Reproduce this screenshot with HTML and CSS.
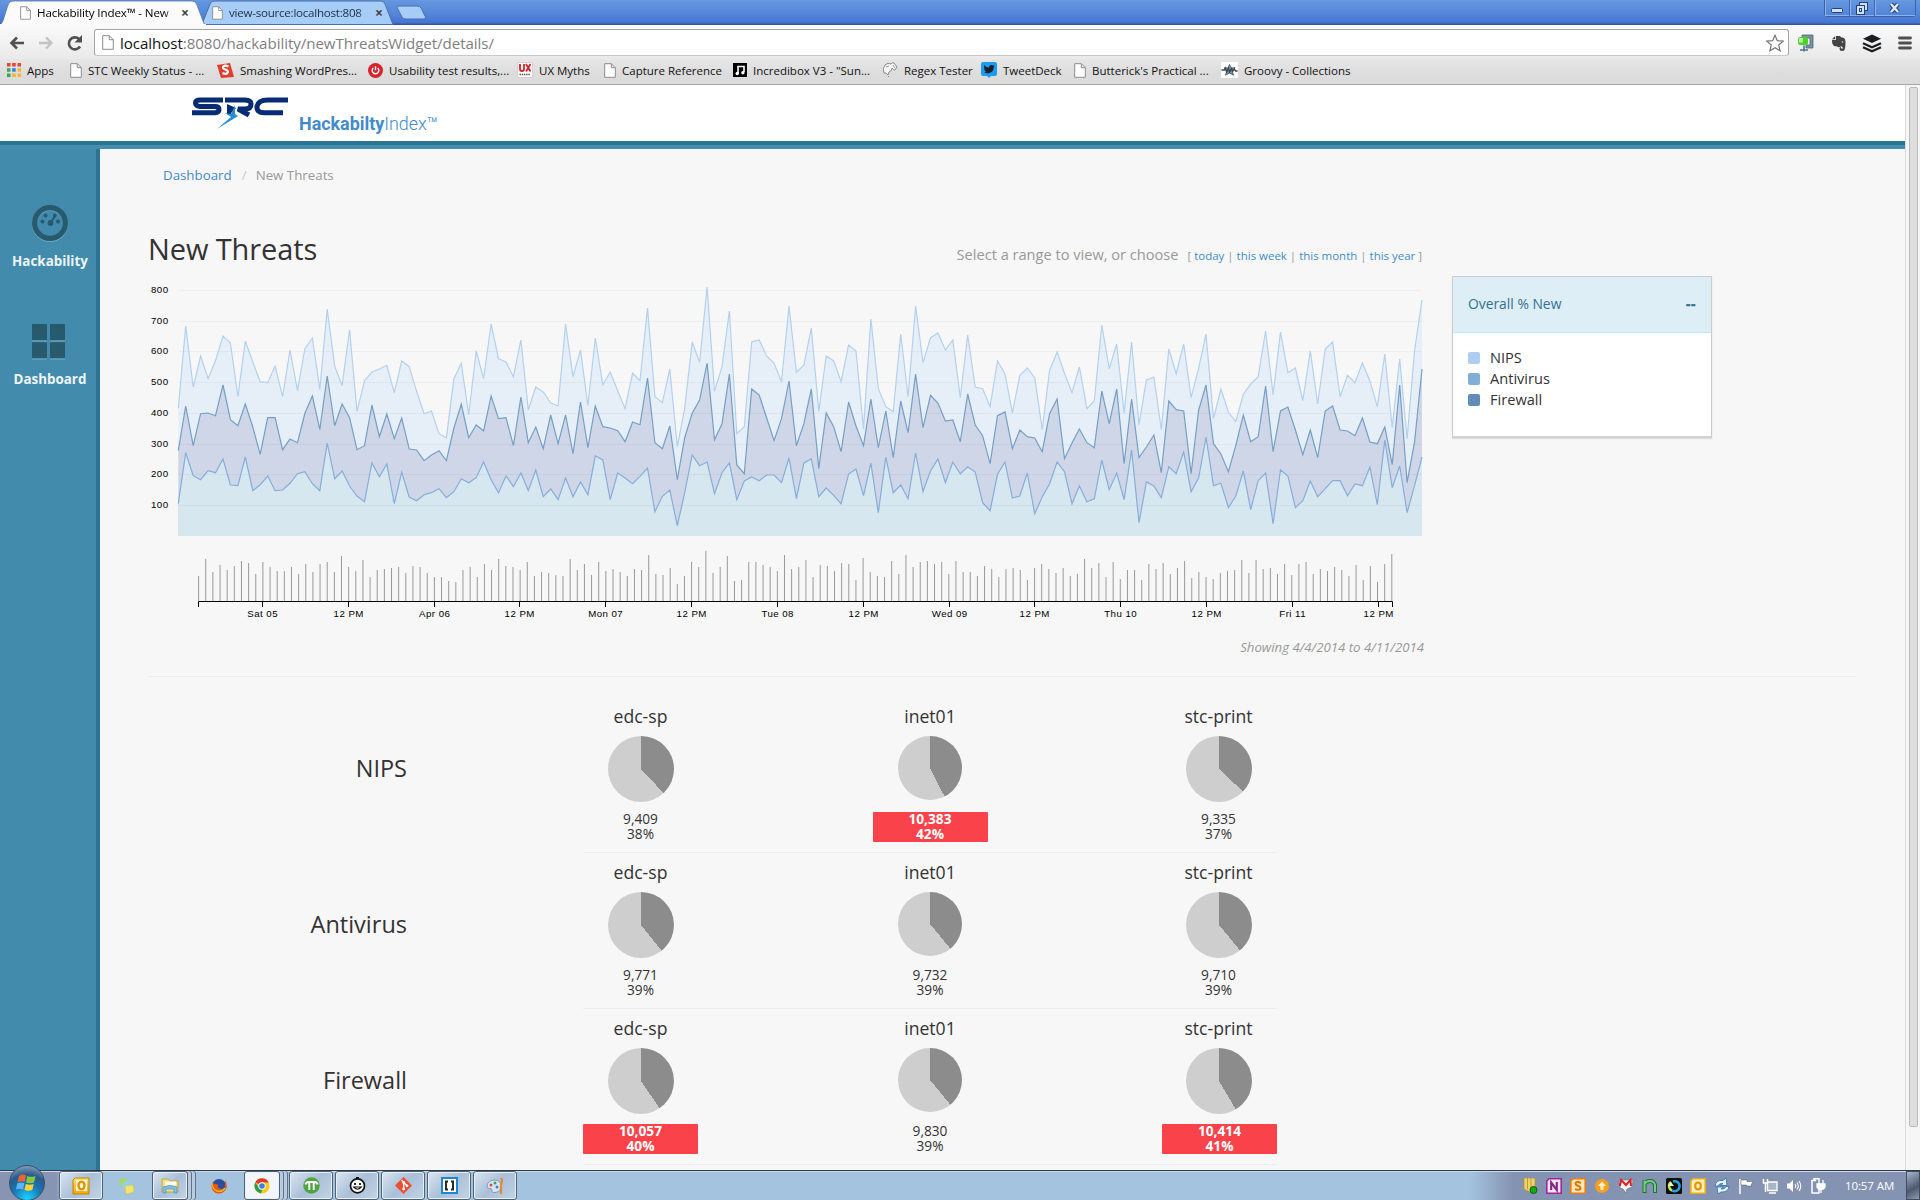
FILE: index.html
```html
<!DOCTYPE html>
<html lang="en">
<head>
<meta charset="utf-8">
<title>Hackability Index™ - New Threats</title>
<link rel="stylesheet" href="styles.css">
</head>
<body>
<svg width="0" height="0" class="defs">
  <defs>
    <symbol id="page" viewBox="0 0 12 15"><path d="M.7.7h6.6l4 4v9.6H.7z" fill="#fff" stroke="#8c8c8c"/><path d="M7.3.7v4h4" fill="none" stroke="#8c8c8c"/></symbol>
    <linearGradient id="gold" x1="0" y1="0" x2="0" y2="1"><stop offset="0" stop-color="#ffdf6b"/><stop offset="1" stop-color="#f0a800"/></linearGradient>
  </defs>
</svg>

<div class="titlebar">
  <svg class="tabs" width="440" height="25" viewBox="0 0 440 25">
    <path d="M202 24.5L210 4q1-3 4-3h167q3 0 4 3l8 20.500z" fill="#a6cdf8" stroke="#4a6fae"/>
    <path d="M397 7.500q0-1.500 2-1.500h18q3 0 4 2l4.500 9q.5 2-1.500 2h-18q-3 0-4-2z" fill="#a6cdf8" stroke="#4a6fae"/>
    <path d="M-1 25C3 24 3 20 8 5q1-4 5-4h179q4 0 5 4l6 16q1 4 3 4z" fill="#fbfbfb" stroke="#5573a8" stroke-width=".8"/>
    <path d="M0 25h206" stroke="#fbfbfb" stroke-width="2"/>
  </svg>
  <div class="tab tab-active"><svg class="i-page" width="11" height="14"><use href="#page"/></svg><span class="tab-title t1">Hackability Index™ - New</span><span class="tab-x">×</span></div>
  <div class="tab tab-back"><svg class="i-page" width="11" height="14"><use href="#page"/></svg><span class="tab-title t2">view-source:localhost:808</span><span class="tab-x">×</span></div>
  <div class="winbtns">
    <span><svg width="14" height="16" viewBox="0 0 14 16"><rect x="1.500" y="8.500" width="11" height="4" rx="1" fill="#cfe1fb" stroke="#25407a"/></svg></span>
    <span><svg width="14" height="16" viewBox="0 0 14 16"><rect x="4.500" y="2.500" width="8" height="8" fill="#cfe1fb" stroke="#25407a"/><rect x="1.500" y="5.500" width="8" height="9" fill="#cfe1fb" stroke="#25407a"/><rect x="4.500" y="8.500" width="2" height="3" fill="none" stroke="#25407a"/></svg></span>
    <span><svg width="14" height="16" viewBox="0 0 14 16"><path d="M3 4l7 8M10 4l-7 8" stroke="#25407a" stroke-width="4.500"/><path d="M3 4l7 8M10 4l-7 8" stroke="#dbe8fc" stroke-width="2.500"/></svg></span>
  </div>
</div>

<div class="toolbar">
  <div class="nav">
    <svg width="18" height="18" viewBox="0 0 18 18"><path d="M16 9H4M9 3.500L3.500 9 9 14.500" fill="none" stroke="#505050" stroke-width="2.600"/></svg>
    <svg width="18" height="18" viewBox="0 0 18 18"><path d="M2 9h12M9 3.500L14.500 9 9 14.500" fill="none" stroke="#c4c4c4" stroke-width="2.400"/></svg>
    <svg width="18" height="18" viewBox="0 0 18 18"><path d="M14 12.500A6 6 0 1 1 13 5" fill="none" stroke="#505050" stroke-width="2.600"/><path d="M16 1v7.500H8.500z" fill="#505050"/></svg>
  </div>
  <div class="omnibox">
    <svg width="12" height="15"><use href="#page"/></svg>
    <span class="url"><b>localhost</b>:8080/hackability/newThreatsWidget/details/</span>
    <svg class="star" width="18" height="18" viewBox="0 0 18 18"><path d="M9 1.200l2.300 5.500 5.900.4-4.500 3.900 1.400 5.800L9 13.700l-5.100 3.100 1.400-5.800L.8 7.100l5.900-.4z" fill="#fff" stroke="#777" stroke-width="1.200"/></svg>
  </div>
  <div class="exts">
    <svg width="18" height="20" viewBox="0 0 18 20"><path d="M5 2h11v13H9v-3h4V5H5z" fill="#7b93a1" stroke="#4e6472" stroke-width=".8"/><rect x="1" y="4" width="10" height="8" rx="2" fill="#4ed22a"/><rect x="2" y="5" width="4" height="4.500" fill="#b9f59e"/><path d="M7 12.500v6M3 17h8" stroke="#4d7394" stroke-width="1.600"/></svg>
    <svg width="16" height="18" viewBox="0 0 16 18"><path d="M5 2h4l1 1.300 3 .7q1.500 1 1.500 5t-1 7q-.5 1-2.500 1-2.500 0-2.500-2.300 0-1.700 1.500-1.700v1.500h2q0-2-2-2.200Q8 14 6 12.500 2.500 12.500 1.500 10 1 8 1 6h4z" fill="#434343"/><path d="M4.200 2v3.200H1z" fill="#434343"/><circle cx="11.500" cy="8" r=".8" fill="#ddd"/></svg>
    <svg width="20" height="20" viewBox="0 0 20 20"><path d="M10 1.500l9 4.200-9 4.200-9-4.200z" fill="#1b1f22"/><path d="M1 10.200l9 4 9-4M1 14.300l9 4 9-4" fill="none" stroke="#1b1f22" stroke-width="2.300"/></svg>
    <svg width="14" height="14" viewBox="0 0 14 14"><path d="M1.500 2h11M1.500 7h11M1.500 12h11" stroke="#4f4f4f" stroke-width="2.800" stroke-linecap="round"/></svg>
  </div>
</div>

<div class="bookmarks">
  <div class="bm"><svg width="14" height="14" viewBox="0 0 14 14"><path d="M0 0h3.500v3.500H0zM5.200 0h3.500v3.500H5.200zM10.500 0H14v3.500h-3.500z" fill="#ea4335"/><path d="M0 5.200h3.500v3.500H0zM0 10.500h3.500V14H0z" fill="#34a853"/><path d="M5.200 5.200h3.500v3.500H5.200z" fill="#2f80ed"/><path d="M10.500 5.200H14v3.500h-3.500zM5.200 10.500h3.500V14H5.200zM10.500 10.500H14V14h-3.500z" fill="#f7b529"/></svg><span>Apps</span></div>
  <div class="bm"><svg width="12" height="15"><use href="#page"/></svg><span>STC Weekly Status - ...</span></div>
  <div class="bm"><svg width="17" height="16" viewBox="0 0 17 16"><path d="M0 3l13-2 4 14-13 1z" fill="#e53b2c"/><path d="M11.500 4.500Q7 2.500 6 5.200c-.5 2.500 5.500 2.200 5 5Q10 13 5.500 11" fill="none" stroke="#fff" stroke-width="2.200"/></svg><span>Smashing WordPres...</span></div>
  <div class="bm"><svg width="15" height="15" viewBox="0 0 15 15"><circle cx="7.500" cy="7.500" r="7.500" fill="#d8232e"/><path d="M5.300 5a3.300 3.300 0 1 0 4.400 0M7.500 3.300v4" fill="none" stroke="#fff" stroke-width="1.400"/></svg><span>Usability test results,...</span></div>
  <div class="bm"><svg width="16" height="16" viewBox="0 0 16 16"><path d="M.5.500h15v15H.500z" fill="#fff" stroke="#e8c9c9"/><path d="M3 2v5q0 2 2 2t2-2V2M9 2l4.500 7.500M13.500 2L9 9.500" fill="none" stroke="#d2232a" stroke-width="1.800"/><path d="M2.500 12.500h11" stroke="#555" stroke-width="1.600" stroke-dasharray="1.500 .7"/></svg><span>UX Myths</span></div>
  <div class="bm"><svg width="12" height="15"><use href="#page"/></svg><span>Capture Reference</span></div>
  <div class="bm"><svg width="14" height="14" viewBox="0 0 14 14"><path d="M0 0h14v14H0z" fill="#000"/><path d="M5 10.500v-7h6V9" fill="none" stroke="#fff" stroke-width="1.600"/><circle cx="4.200" cy="10.500" r="1.700" fill="#fff"/><circle cx="9.900" cy="9.700" r="1.700" fill="#fff"/></svg><span>Incredibox V3 - "Sun...</span></div>
  <div class="bm"><svg width="16" height="16" viewBox="0 0 16 16"><path d="M2 11Q0 6 3 3t6-1q1-2 3-1l3 4-2 3q-2 0-3-2 0 3-3 4l-1 3-2-2zM6 14l1 1" fill="#f4f4f4" stroke="#8b8b8b"/><path d="M4 5l3-1M11 3l2 3" stroke="#999"/></svg><span>Regex Tester</span></div>
  <div class="bm"><svg width="16" height="16" viewBox="0 0 16 16"><path d="M2 0h12q2 0 2 2v10q0 2-2 2h-4l-2 2-2-2H2q-2 0-2-2V2Q0 0 2 0z" fill="#1c9bf0"/><path d="M3 3q2.500 2.500 5 2.500Q8 3 10.500 3q1 0 1.700.8l1.300-.5-.8 1.500Q13 10 8 11.200q-3 .3-4.800-1l2-.7Q3.500 9 3.600 8 3 5.500 3 3z" fill="#17202a"/></svg><span>TweetDeck</span></div>
  <div class="bm"><svg width="12" height="15"><use href="#page"/></svg><span>Butterick's Practical ...</span></div>
  <div class="bm"><svg width="17" height="16" viewBox="0 0 17 16"><path d="M0 0h17v16H0z" fill="#fff"/><path d="M8.500 2.500l1.600 3.500 4-.2-3 3 1.400 4.400-4-2.300-4 2.300L6 8.800 3 5.900l4 .1z" fill="#6b96aa" stroke="#4c6a79"/><path d="M.5 8h3l1-2 1 4 2-3.500 1 3.500 2-3.500 1 3 2-2.500 1 2h2" stroke="#444" stroke-width="1.300" fill="none"/></svg><span>Groovy - Collections</span></div>
</div>

<div class="viewport">
  <div class="site">
    <header class="site-header">
      <svg class="logo" width="98" height="33" viewBox="0 0 98 33">
        <g fill="none" stroke="#082c74" stroke-width="5">
          <path d="M32 4H9Q4.500 4 4.500 7T9 10.500h15q4 0 4 3t-4 3.200H1"/>
          <path d="M34 4h20q6 0 6 4 0 5-6 5h-7l11 6"/>
          <path d="M97 4H77Q67 4 66 10.500q-.5 6.200 7 6.200h19"/>
        </g>
        <path d="M36 8l9 4-5 5 1 2-5-1z" fill="#082c74"/>
        <path d="M44 9l-4 9-6-1 6 4-14 12 21-13-3-2z" fill="#1f8fd6"/>
      </svg>
      <div class="brand"><b>Hackabilty</b><span>Index™</span></div>
    </header>
    <div class="site-body">
      <nav class="sidebar">
        <a class="side-item">
          <svg width="36" height="37" viewBox="0 0 36 37"><circle cx="18" cy="19" r="15.500" fill="none" stroke="#6fa9c3" stroke-width="5"/><circle cx="18" cy="18" r="15.400" fill="none" stroke="#285a6d" stroke-width="5.200"/><g fill="#285a6d"><circle cx="18.500" cy="18" r="2.900"/><circle cx="10.500" cy="16.500" r="2"/><circle cx="13.500" cy="10.500" r="1.900"/><circle cx="26" cy="16.500" r="2"/><circle cx="22.800" cy="10.500" r="1.900"/></g><path d="M18.500 18l4.500-7" stroke="#285a6d" stroke-width="2"/></svg>
          <span>Hackability</span>
        </a>
        <a class="side-item">
          <svg width="34" height="36" viewBox="0 0 34 36"><g fill="#6fa9c3"><path d="M0 1h15v16.500H0zM18 1h15v16.500H18zM0 19h15v16.500H0zM18 19h15v16.500H18z"/></g><g fill="#285a6d"><path d="M0 0h15v16.200H0zM18 0h15v16.200H18zM0 18.300h15v16H0zM18 18.300h15v16H18z"/></g></svg>
          <span>Dashboard</span>
        </a>
      </nav>
      <main class="main">
        <ol class="crumbs"><li><a>Dashboard</a></li><li class="sep">/</li><li>New Threats</li></ol>
        <div class="overview">
          <section class="timeline">
            <div class="timeline-head">
              <h1>New Threats</h1>
              <p class="range"><span class="range-lead">Select a range to view, or choose</span><small>[ <a>today</a> | <a>this week</a> | <a>this month</a> | <a>this year</a> ]</small></p>
            </div>
            <svg id="chart" class="chart" width="1276" height="350" viewBox="148 270 1276 350"></svg>
            <p class="showing">Showing 4/4/2014 to 4/11/2014</p>
          </section>
          <aside class="panel">
            <div class="panel-head"><span>Overall % New</span><b>--</b></div>
            <ul class="legend"><li><i class="sw-nips"></i><span>NIPS</span></li><li><i class="sw-av"></i><span>Antivirus</span></li><li><i class="sw-fw"></i><span>Firewall</span></li></ul>
          </aside>
        </div>
        <hr>
        <section class="hosts">
          <div class="host-row">
            <h2>NIPS</h2>
            <div class="cells">
              <div class="cell"><h3>edc-sp</h3><div class="pie" style="--p:38"></div><div class="val"><span>9,409</span><span>38%</span></div></div>
              <div class="cell"><h3>inet01</h3><div class="pie pie-s" style="--p:42.500"></div><div class="val hot"><span>10,383</span><span>42%</span></div></div>
              <div class="cell"><h3>stc-print</h3><div class="pie" style="--p:37"></div><div class="val"><span>9,335</span><span>37%</span></div></div>
            </div>
          </div>
          <div class="host-row">
            <h2>Antivirus</h2>
            <div class="cells">
              <div class="cell"><h3>edc-sp</h3><div class="pie" style="--p:39.300"></div><div class="val"><span>9,771</span><span>39%</span></div></div>
              <div class="cell"><h3>inet01</h3><div class="pie pie-s" style="--p:39"></div><div class="val"><span>9,732</span><span>39%</span></div></div>
              <div class="cell"><h3>stc-print</h3><div class="pie" style="--p:39"></div><div class="val"><span>9,710</span><span>39%</span></div></div>
            </div>
          </div>
          <div class="host-row">
            <h2>Firewall</h2>
            <div class="cells">
              <div class="cell"><h3>edc-sp</h3><div class="pie" style="--p:40.500"></div><div class="val hot"><span>10,057</span><span>40%</span></div></div>
              <div class="cell"><h3>inet01</h3><div class="pie pie-s" style="--p:39"></div><div class="val"><span>9,830</span><span>39%</span></div></div>
              <div class="cell"><h3>stc-print</h3><div class="pie" style="--p:41.500"></div><div class="val hot"><span>10,414</span><span>41%</span></div></div>
            </div>
          </div>
        </section>
      </main>
    </div>
  </div>
  <div class="scrollbar"><div class="thumb"></div></div>
</div>

<div class="taskbar">
  <div class="orb"><svg width="22" height="22" viewBox="0 0 22 22"><path d="M3 4q4-2.500 7-.5L8.700 10Q5.500 8.300 1.600 10z" fill="#f0652f"/><path d="M11.300 4q3.500 1.700 8.200 0L18 10.500q-4 1.500-8 .1z" fill="#8cc63e"/><path d="M1.300 11.300q3.700-1.800 7.100 0L7 17.500q-3-1.700-7 0z" fill="#5bb5f0"/><path d="M9.700 12q4 1.500 8 .1l-1.500 6q-4 1.500-7.700 0z" fill="#ffd335"/></svg></div>
  <div class="apps">
    <div class="app framed"><svg width="18" height="18" viewBox="0 0 18 18"><path d="M3 1h14v16H1V3z" fill="url(#gold)" stroke="#c98200"/><path d="M4 3h11v11H4z" fill="#fff7d8"/><ellipse cx="9.500" cy="8.500" rx="3" ry="3.800" fill="none" stroke="#dd9100" stroke-width="2.300"/></svg></div>
    <div class="app"><svg width="18" height="18" viewBox="0 0 18 18"><path d="M1 2l7-1 1 7-7 1z" fill="#a9d86a"/><path d="M4 6l8-2 2 7-8 2z" fill="#8fd0ef"/><path d="M7 9l8-1 1 7-8 2z" fill="#f5e46a" stroke="#d9c84a" stroke-width=".7"/></svg></div>
    <div class="app framed stack"><svg width="18" height="16" viewBox="0 0 18 16"><path d="M1 1h6l2 2h8v11H1z" fill="#f5dc86" stroke="#c9a545"/><path d="M4 3.500h11v4H4z" fill="#fffbe6"/><path d="M2 15V9q7-3 14 0v6h-3v-4H5v4z" fill="#7cc3ea" stroke="#4a93c2" stroke-width=".7"/></svg></div>
    <div class="app"><svg width="16" height="16" viewBox="0 0 16 16"><circle cx="8" cy="8" r="7" fill="#2b4f9e"/><path d="M1 4q1 2 3 2 4 0 3 2t3 3 4-1V2q3 5 1 9-3 5-8 4.500T.5 9z" fill="#e55a10"/><path d="M1 5q0 6 5 8 5 1.500 8-3" fill="none" stroke="#ffb02a" stroke-width="1.400"/></svg></div>
    <div class="app framed stack lit"><svg width="16" height="16" viewBox="0 0 16 16"><circle cx="8" cy="8" r="7.500" fill="#fbc918"/><path d="M8 8L1.300 4.300A7.600 7.600 0 0 1 14.800 4.600L8 4.600z" fill="#de3b2c"/><path d="M1.300 4.300L5 10l3.500 1-1.500 4.400A7.600 7.600 0 0 1 1.300 4.300z" fill="#2e9e4c"/><circle cx="8" cy="8" r="3.700" fill="#fff"/><circle cx="8" cy="8" r="2.800" fill="#3f7de0"/></svg></div>
    <div class="app framed"><svg width="17" height="17" viewBox="0 0 17 17"><circle cx="8.500" cy="8.500" r="8.200" fill="#4fa541"/><path d="M2.500 7.500Q3 5 5.500 5h6q2.500 0 3 2.500M6.300 5.500V13M10.700 5.500V13" fill="none" stroke="#fff" stroke-width="1.900"/></svg></div>
    <div class="app framed"><svg width="17" height="17" viewBox="0 0 17 17"><circle cx="8.500" cy="8.800" r="7" fill="#fff" stroke="#111" stroke-width="1.700"/><circle cx="6" cy="7" r="1.100"/><circle cx="11" cy="7" r="1.100"/><path d="M4.800 10q3.700 4.500 7.400 0z" fill="#fff" stroke="#111" stroke-width="1.200"/><path d="M7 1h3" stroke="#111" stroke-width="2"/></svg></div>
    <div class="app framed"><svg width="17" height="17" viewBox="0 0 17 17"><path d="M8.500 0L17 8.500 8.500 17 0 8.500z" fill="#f04e32"/><path d="M6.500 3l2.200 2.200v7M8.700 5.500l3.300 3.300" fill="none" stroke="#fff" stroke-width="1.300"/><circle cx="8.700" cy="5.500" r="1.400" fill="#fff"/><circle cx="8.700" cy="12" r="1.400" fill="#fff"/><circle cx="12" cy="8.800" r="1.400" fill="#fff"/></svg></div>
    <div class="app framed"><svg width="17" height="17" viewBox="0 0 17 17"><path d="M1 1h15v15H1z" fill="#fff" stroke="#1d86cf" stroke-width="2"/><path d="M7 4.500H5v8h2M10 4.500h2v8h-2" fill="none" stroke="#222" stroke-width="1.900"/></svg></div>
    <div class="app framed"><svg width="18" height="18" viewBox="0 0 18 18"><path d="M1 9q1-6 8-6 6 .5 6 6 0 6-6 6.500Q5 16 6 13q0-2-3-1.500-2 0-2-2.500z" fill="#d6e6f4" stroke="#7d9cbb"/><circle cx="5" cy="8" r="1.500" fill="#e2483d"/><circle cx="9" cy="6" r="1.500" fill="#3ba55c"/><circle cx="11" cy="10" r="1.500" fill="#3b7de0"/><path d="M15 1q2 3 0 6v10" fill="none" stroke="#e58a28" stroke-width="2.200"/></svg></div>
  </div>
  <div class="tray">
    <svg viewBox="0 0 16 16"><path d="M2 0h11v10l-5 4-6-3z" fill="#f1d269" stroke="#b08f2a" stroke-width=".7"/><path d="M5.500 0v11M9 0v10" stroke="#b99a34"/><circle cx="11.500" cy="12" r="3.500" fill="#18a818" stroke="#0a5f0a"/></svg>
    <svg viewBox="0 0 16 16"><path d="M3 .8h12.200v14.400H.8V3z" fill="#f6e3f6" stroke="#a1259f" stroke-width="1.600"/><path d="M5.200 12V4.500l5.600 7.500V4" fill="none" stroke="#7b2a86" stroke-width="2.100"/></svg>
    <svg viewBox="0 0 16 16"><path d="M3 .8h12.200v14.400H.8V3z" fill="#fde9b8" stroke="#e87d10" stroke-width="1.600"/><path d="M11 5Q6 2.800 5.500 5.700c0 2.300 5 1.800 5 4.300 0 2.500-4 2-5.500 1" fill="none" stroke="#e06f00" stroke-width="2"/></svg>
    <svg viewBox="0 0 16 16"><circle cx="8" cy="8" r="7" fill="#ff9d1e"/><path d="M8 3.500l4 4.500H9.500v4h-3V8H4z" fill="#fff3c8"/></svg>
    <svg viewBox="0 0 16 16"><path d="M1 2h14l-1 7-5 2-1 4-3-4-3-1z" fill="#f3f3f3" stroke="#6c6c7c" stroke-width=".6"/><path d="M2 8l1-6 5 5 4.500-5L13 8" fill="none" stroke="#df2020" stroke-width="2"/></svg>
    <svg viewBox="0 0 16 16"><path d="M2.500 15V2M2.500 6Q4 3 8 3t5 4v8" fill="none" stroke="#1f7237" stroke-width="4"/><path d="M2.500 14V2.500M2.500 6Q4 3 8 3t5 4v7" fill="none" stroke="#75cc85" stroke-width="2"/></svg>
    <svg viewBox="0 0 16 16"><rect width="16" height="16" rx="1.500" fill="#0c0f10"/><path d="M5 4a5 5 0 0 0 1 8.500" fill="none" stroke="#c9e84a" stroke-width="2.500"/><path d="M6 12.500A5 5 0 1 0 7 3.500" fill="none" stroke="#27a3e3" stroke-width="2.500"/><path d="M2 8h6l-3-4z" fill="#e8f7c0"/></svg>
    <svg viewBox="0 0 16 16"><path d="M3 .8h12.200v14.400H.8V3z" fill="#fff0bd" stroke="#eeaa14" stroke-width="1.600"/><ellipse cx="8" cy="8" rx="2.800" ry="3.500" fill="none" stroke="#e09400" stroke-width="2.200"/></svg>
    <svg viewBox="0 0 16 16"><path d="M1 8q1-6.500 8-5.500L12 0l1 7.500H6.500L9 5.500Q5 5 4 8zM15 8.500q-1 6-8 5.500L4 16 3 9h6.500L7 11q4 .5 5-2.500z" fill="#e8f4fd" stroke="#3577b9" stroke-width=".9"/></svg>
    <svg viewBox="0 0 16 16"><path d="M2 1v15" stroke="#fff" stroke-width="1.500"/><path d="M3 2h6v1.500h6L13 7l1 1H8.500V7H3z" fill="#fff" stroke="#4e5a75" stroke-width=".5"/></svg>
    <svg viewBox="0 0 16 16"><path d="M5.500 4h9.500v8.500H5.500z" fill="#aab4c8" stroke="#fff" stroke-width="1.300"/><path d="M7 15h7M1.500 1v4h4V1M3.500 5v9" fill="none" stroke="#fff" stroke-width="1.500"/></svg>
    <svg viewBox="0 0 16 16"><path d="M1 5.500h2.500L7 2v12L3.500 10.500H1z" fill="#fff"/><path d="M9 6q1.500 2 0 4M11 4.500q2.500 3.500 0 7M13 3q3.500 5 0 10" fill="none" stroke="#fff" stroke-width="1.100"/></svg>
    <svg viewBox="0 0 16 16"><path d="M6 2.500H2v12.500h7v-4M4 2V.7h5V2" fill="none" stroke="#fff" stroke-width="1.500"/><path d="M7 6h8v3q-1 2.500-4 2.500T7 9zM9 2v4M13 2v4M11 11v4" fill="#fff" stroke="#fff" stroke-width="1.300"/></svg>
  </div>
  <div class="clock">10:57 AM</div>
  <div class="peek"></div>
</div>
<script src="chart.js"></script>
</body>
</html>
```
FILE: styles.css
```css
* { box-sizing: border-box; }
body { margin: 0; width: 1920px; height: 1200px; overflow: hidden; display: flex; flex-direction: column; font-family: "Open Sans", "Noto Sans", sans-serif; color: #333; background: #f7f7f7; }
svg { display: block; flex: none; }
.defs { position: absolute; }
h1, h2, h3, p, ol, ul { margin: 0; padding: 0; font-weight: 400; list-style: none; }

/* browser chrome */
.titlebar { position: relative; flex: none; height: 25px; display: flex; background: linear-gradient(#6697e0, #5588d9 50%, #4674d2 92%, #34549b 96%); font-size: 11.600px; color: #000; }
.tabs { position: absolute; left: 0; top: 0; }
.tab { position: relative; display: flex; align-items: center; height: 25px; }
.tab-active { width: 192px; padding-left: 20px; }
.tab-back { padding-left: 20px; width: 200px; }
.tab-title { margin-left: 6px; overflow: hidden; white-space: nowrap; line-height: 25px; }
.t1 { width: 136px; letter-spacing: -.13px; -webkit-mask-image: linear-gradient(90deg, #000 93%, #0006); }
.t2 { width: 138px; letter-spacing: -.25px; color: #1f2c40; -webkit-mask-image: linear-gradient(90deg, #000 93%, #0006); }
.tab-x { margin-left: 8px; font: bold 14px/25px "Open Sans", sans-serif; color: #444; }
.winbtns { position: relative; margin-left: auto; margin-right: 4px; display: flex; width: 92px; height: 17px; border: 1px solid #3d5fa5; border-top: 0; border-radius: 0 0 4px 4px; }
.winbtns span { flex: 25; display: flex; justify-content: center; border-right: 1px solid #4263ab; box-shadow: inset 1px -1px #8db0ee; }
.winbtns span:last-child { flex: 42; border: 0; }
.toolbar { flex: none; height: 34px; display: flex; background: linear-gradient(#fafafa, #e9e9e9); }
.nav { display: flex; align-items: center; gap: 11px; width: 94px; padding: 0 0 0 8px; height: 36px; }
.omnibox { display: flex; align-items: center; width: 1695px; height: 27px; margin-top: 4px; padding: 0 4px 0 7px; border: 1px solid #a3a3a3; border-bottom-color: #c8c8c8; border-radius: 3px; background: #fff; }
.url { margin-left: 6px; font-size: 15.100px; color: #808080; letter-spacing: -.05px; }
.url b { font-weight: 400; color: #111; }
.star { margin-left: auto; }
.exts { display: flex; align-items: center; height: 35px; margin-left: 8px; width: 123px; justify-content: space-between; padding-right: 8px; }
.bookmarks { flex: none; height: 26px; display: grid; grid-template-columns: 63px 147px 151px 149px 87px 129px 149px 99px 93px 147px 200px; padding-left: 7px; background: linear-gradient(#e7e7e7, #dcdcdc 60%); border-bottom: 1px solid #a6a6a6; font-size: 11.500px; color: #111; }
.bm { display: flex; align-items: center; gap: 6px; white-space: nowrap; height: 22px; }

/* site */
.viewport { flex: 1; min-height: 0; display: flex; overflow: hidden; }
.site { width: 1905px; height: 1085px; overflow: hidden; display: flex; flex-direction: column; }
.site-header { flex: none; height: 64px; background: #fff; border-bottom: 4px solid #418eb0; box-shadow: inset 0 -4px #2b7590; display: flex; padding-left: 191px; }
.logo { margin-top: 11px; }
.brand { margin: 26px 0 0 10px; font: 300 17.900px/25px Roboto, sans-serif; color: #428bca; }
.brand b { font-weight: 700; }
.site-body { flex: 1; min-height: 0; display: flex; }
.sidebar { flex: none; width: 100px; background: #428bad; border-right: 4px solid #2e7394; padding-top: 56px; }
.side-item { display: flex; flex-direction: column; align-items: center; width: 100px; height: 120px; color: #eef5f8; font-size: 13.400px; font-weight: 700; line-height: 20px; }
.side-item span { margin-top: 9px; }
.side-item:last-child svg { margin: -1px 0 0 -2px; }
.main { flex: 1; padding: 16px 0 0 48px; background: #f7f7f7; }
.crumbs { display: flex; gap: 10px; padding-left: 15px; font-size: 13.300px; line-height: 20px; color: #999; }
.crumbs a, .range a { color: #428bca; }
.crumbs .sep { color: #ccc; width: 4px; }
.overview { display: grid; grid-template-columns: 1276px 260px; column-gap: 28px; margin-top: 44px; align-items: start; }
.timeline-head { display: flex; justify-content: space-between; align-items: baseline; height: 40px; padding-right: 2px; }
h1 { font-size: 29px; line-height: 40px; letter-spacing: -.1px; }
.range { display: flex; align-items: baseline; gap: 9px; color: #999; }
.range-lead { font-size: 14.600px; }
.range small { font-size: 11.480px; }
.chart { margin-top: 1px; }
.showing { margin-top: 18px; font-size: 13.200px; line-height: 18px; font-style: italic; text-align: right; color: #999; }
.panel { margin-top: 47px; height: 162px; background: #fff; border: 1px solid #ccc; border-bottom: 2px solid #d2d2d2; box-shadow: 0 1px 1px #ddd; }
.panel-head { display: flex; justify-content: space-between; height: 56px; padding: 0 15px; line-height: 54px; background: #ddeef6; border-bottom: 1px solid #bcebf1; font-size: 13.850px; color: #31708f; }
.panel-head b { letter-spacing: .5px; -webkit-text-stroke: .3px; }
.legend { padding: 14px 15px 0; font-size: 14.600px; line-height: 21px; }
.legend li { display: flex; align-items: center; gap: 10px; }
.legend i { width: 12px; height: 12px; border-radius: 2px; margin-top: 1px; }
.sw-nips { background: #aecdf0; }
.sw-av { background: #82add6; }
.sw-fw { background: #608cb8; }
hr { width: 1709px; margin: 20px 0; border: 0; border-top: 1px solid #ededed; }
.host-row { display: flex; height: 156px; }
h2 { width: 259px; padding-top: 55px; text-align: right; font-size: 23.500px; line-height: 32px; }
.cells { display: flex; justify-content: space-between; width: 694px; margin-left: 176px; border-bottom: 1px solid #ededed; }
.cell { width: 115px; display: flex; flex-direction: column; align-items: center; padding-top: 7px; }
.cell:last-child > :not(.hot) { transform: translateX(-1px); }
h3 { font-size: 17.600px; line-height: 24px; }
.pie { width: 66px; height: 66px; margin: 8px 0 10px; border-radius: 50%; background: conic-gradient(#8c8c8c calc(var(--p) * 1%), #cecece 0); }
.pie-s { width: 64px; height: 64px; margin-bottom: 12px; }
.val { display: flex; flex-direction: column; width: 115px; height: 30px; text-align: center; font-size: 13.700px; }
.val span { line-height: 15px; height: 15px; margin-top: -1px; }
.val span + span { margin-top: 0; }
.hot { background: #fa424a; color: #fff; font-weight: 700; border-radius: 1px; }
.scrollbar { width: 15px; padding: 2px 2px 0 3px; background: #f6f6f6; border-left: 1px solid #dcdcdc; }
.thumb { height: 1040px; border: 1px solid #bababa; border-radius: 2px; background: #dedede; }

/* taskbar */
.taskbar { position: relative; flex: none; height: 30px; display: flex; border-top: 1px solid #2d3b4d; background: linear-gradient(90deg, #8794b2 0 56px, #a4c3df 64px 1470px, #8493b1 1513px); box-shadow: inset 0 1px #cbd9e8; }
.orb { position: absolute; left: 9px; top: -6px; width: 36px; height: 36px; border-radius: 50%; border: 1px solid #3b5064; background: radial-gradient(circle at 50% 95%, #1fd0ff, #1976b5 40%, #2b5b8c 65%, #a8bccd); display: flex; align-items: center; justify-content: center; }
.apps { display: flex; align-items: stretch; padding-left: 59px; gap: 2px; }
.app { width: 44px; display: flex; align-items: center; justify-content: center; }
.framed { border: 1px solid #4f6175; border-radius: 3px; background: linear-gradient(135deg, #dbe6f2, #aabfd8 50%, #c2d3e5); box-shadow: inset 0 0 0 1px #e8f0f8; }
.stack { width: 36px; margin: 0 7px 0 1px; box-shadow: inset 0 0 0 1px #e8f0f8, 3px 0 #b8cce0, 4px 0 #5f7288, 7px 0 #b8cce0, 8px 0 #5f7288; }
.lit { background: #f2f6fb; }
.tray { display: flex; gap: 8px; align-items: center; margin-left: auto; margin-top: 1px; }
.tray svg { width: 16px; height: 16px; }
.clock { margin-left: 19px; width: 51px; color: #fff; font-size: 11.500px; line-height: 29px; letter-spacing: -.1px; white-space: nowrap; }
.peek { margin-left: 10px; width: 14px; border: 1px solid #3f4b60; background: linear-gradient(150deg, #a9b5c8, #4d5a71 60%, #8d99b0); }
```
FILE: chart.js
```js
// Hourly samples for the week, as depths below the top of the plot (thirds of a pixel).
const nips = [415,168,352,258,326,272,198,219,380,213,276,335,338,288,380,240,362,236,204,359,117,289,347,180,425,332,306,297,286,368,273,290,364,431,423,491,503,326,280,434,243,326,162,266,276,320,210,419,351,366,399,408,162,320,240,407,204,344,306,362,416,310,332,114,380,398,297,530,414,216,277,51,364,290,123,491,470,216,210,258,280,335,108,307,286,174,425,258,273,335,225,243,476,147,356,410,425,192,380,108,278,204,189,240,210,383,195,351,356,410,273,312,429,316,294,323,479,301,246,310,368,291,416,393,165,296,222,429,216,464,330,321,479,237,311,222,383,296,192,446,357,426,455,373,342,320,183,374,186,308,294,392,243,402,237,216,380,316,338,279,333,410,252,473,267,506,240,90];
const firewall = [542,408,527,431,429,437,345,449,467,402,471,553,443,443,539,507,518,430,378,479,318,467,402,443,539,527,405,500,432,506,444,537,540,572,555,542,572,474,402,503,465,483,378,446,443,527,381,518,471,536,435,521,435,551,396,533,408,470,474,482,515,456,464,324,518,536,468,629,503,430,390,279,509,461,312,585,611,357,375,443,512,446,333,527,461,357,596,429,470,545,396,468,527,387,533,423,563,393,488,312,473,376,399,453,450,515,372,465,497,581,437,426,536,480,500,504,545,431,387,566,519,477,518,533,363,461,357,581,387,563,531,495,608,393,419,423,611,421,345,521,552,605,526,435,515,500,348,545,423,411,480,554,480,563,423,408,480,483,497,444,516,521,471,584,345,638,515,297];
const antivirus = [701,548,617,629,602,608,567,645,647,561,662,644,618,662,660,640,611,605,641,662,519,626,603,648,678,695,579,620,582,701,606,681,692,674,668,656,683,665,626,638,623,576,629,668,618,650,609,662,600,680,657,689,624,680,636,674,558,570,689,609,624,641,619,594,725,679,660,767,668,555,587,576,671,608,579,689,633,621,632,615,615,638,564,686,579,567,680,654,676,701,612,597,677,579,728,561,668,645,686,549,665,603,567,638,576,611,590,606,698,722,613,576,684,678,609,731,681,641,576,605,701,648,695,686,570,659,609,689,540,758,636,648,683,590,611,546,665,624,501,647,640,713,678,603,719,632,609,761,600,618,713,692,633,680,656,632,632,677,642,647,591,704,510,653,588,728,646,561];

const LEFT = 178.3, RIGHT = 1422, TOP = 270, BASE = 536;
const step = (RIGHT - LEFT) / (nips.length - 1);
const out = [];
const line = s => s.map((y, i) => (LEFT + i * step).toFixed(1) + ',' + (TOP + y / 3).toFixed(1)).join(' ');
const layer = (s, fill, stroke) => {
  out.push(`<polygon points="${LEFT},${BASE} ${line(s)} ${RIGHT},${BASE}" fill="${fill}"/>`);
  return `<polyline points="${line(s)}" fill="none" stroke="${stroke}" stroke-width="1.2"/>`;
};
const grid = [290.5, 321.5, 351.5, 382.5, 413.5, 444.5, 474.5, 505.5];
const strokes = [
  layer(nips, '#e6eff7', '#b3d1ef'),
  layer(firewall, '#cfd6e7', '#759fc6'),
  layer(antivirus, '#d6e7ef', '#86addb')
];
grid.forEach((y, i) => {
  out.push(`<path d="M179 ${y}H1422" stroke="#000" stroke-opacity=".035"/>`);
  out.push(`<text x="168.500" y="${y + 2.5}" class="tick" text-anchor="end">${800 - i * 100}</text>`);
});
out.push(...strokes);

// Mini bar strip under the plot
const bx = 198.1, bstep = (1391.3 - 198.1) / (nips.length - 1);
nips.forEach((y, i) => {
  const top = Math.round(TOP + (918 - (415 - y) * 0.205) / 3);
  out.push(`<rect x="${(bx + i * bstep).toFixed(2)}" y="${top}" width="1" height="${601 - top}" fill="#999"/>`);
});
out.push('<path d="M198.500 607V601.500H1392.500V607" fill="none" stroke="#000"/>');
['Sat 05', '12 PM', 'Apr 06', '12 PM', 'Mon 07', '12 PM', 'Tue 08', '12 PM', 'Wed 09', '12 PM', 'Thu 10', '12 PM', 'Fri 11', '12 PM'].forEach((t, i) => {
  const x = Math.floor(262.4 + i * 85.84) + 0.5;
  out.push(`<path d="M${x} 601V607" stroke="#000"/><text x="${x + 0.2}" y="617" class="tick" text-anchor="middle">${t}</text>`);
});
const style = 'font-family="Liberation Sans, Arial, sans-serif" font-size="9.7" letter-spacing=".45" fill="#000"';
document.getElementById('chart').innerHTML = `<g ${style}>${out.join('')}</g>`;
```
